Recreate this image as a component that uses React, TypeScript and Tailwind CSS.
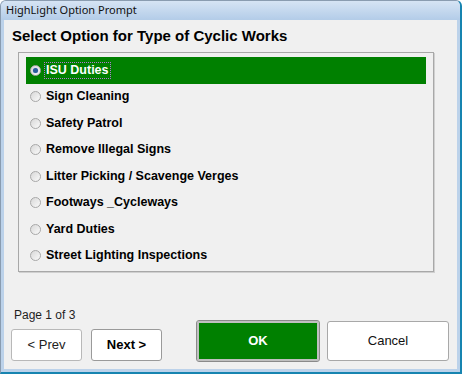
/**
 * HighLight option prompt dialog.
 */
const options = [
  "ISU Duties",
  "Sign Cleaning",
  "Safety Patrol",
  "Remove Illegal Signs",
  "Litter Picking / Scavenge Verges",
  "Footways _Cycleways",
  "Yard Duties",
  "Street Lighting Inspections",
];

const Radio = ({ checked }: { checked: boolean }) => (
  <div className="w-[11px] h-[11px] rounded-full border border-[#a8a8a8] bg-gradient-to-br from-[#d8d8d8] to-[#fafafa] flex items-center justify-center shrink-0">
    {checked && <div className="w-[5px] h-[5px] rounded-full bg-[#2a5d9c] shadow-[0_0_1px_#6fa3e0]" />}
  </div>
);

const OptionRow = ({ label, selected }: { label: string; selected: boolean }) => (
  <li className={`flex items-center h-[26.5px] pl-[4px] ${selected ? "bg-[#008000]" : ""}`}>
    <Radio checked={selected} />
    <span
      className={`ml-[4px] px-[1px] text-[12.5px] font-bold leading-[15px] ${
        selected ? "text-white outline outline-1 outline-dotted outline-[#b07ad0]" : "text-black"
      }`}
    >
      {label}
    </span>
  </li>
);

export default function App() {
  return (
    <div
      className="w-[462px] h-[374px] flex flex-col bg-[#bcd2ea] border-l border-t border-[#8a9cb0] border-r-2 border-r-[#1784b0] border-b-2 border-b-[#1784b0] rounded-t-[6px] overflow-hidden"
      style={{ fontFamily: '"Liberation Sans", Arial, sans-serif' }}
    >
      {/* title bar */}
      <div className="h-[19px] shrink-0 flex items-center px-[5px] bg-gradient-to-b from-[#d6e4f4] to-[#b3cce8]">
        <span className="text-[11px] text-[#101010]" style={{ fontFamily: '"Noto Sans", "Liberation Sans", sans-serif' }}>
          HighLight Option Prompt
        </span>
      </div>

      {/* client area */}
      <div className="flex-1 flex flex-col mx-[3px] mb-[3px] bg-[#f0f0f0]">
        <div className="h-[32px] shrink-0 flex items-center pl-[8px]">
          <h1 className="text-[15px] font-bold text-black">Select Option for Type of Cyclic Works</h1>
        </div>

        <div className="ml-[14px] w-[416px] h-[220px] border border-[#a8a8a8] shadow-[1px_1px_0_#d0d0d0] pt-[4px] px-[7px]">
          <ul className="flex flex-col">
            {options.map((o, i) => (
              <OptionRow key={o} label={o} selected={i === 0} />
            ))}
          </ul>
        </div>

        <div className="flex-1 flex items-end pb-[8px] pl-[7px]">
          <div className="flex flex-col">
            <span className="ml-[3px] mb-[5px] text-[12px] text-[#1e1e1e]">Page 1 of 3</span>
            <div className="flex gap-[9px]">
              <button className="w-[71px] h-[32px] bg-white border border-[#b8b8b8] rounded-[3px] text-[13px] text-[#222]">
                &lt; Prev
              </button>
              <button className="w-[71px] h-[32px] bg-white border border-[#9a9a9a] rounded-[3px] text-[13px] font-bold text-black">
                Next &gt;
              </button>
            </div>
          </div>
          <button className="ml-[35px] w-[122px] h-[40px] bg-[#008000] border-2 border-[#c0c0c0] outline outline-1 outline-[#8a8a8a] rounded-[2px] text-[13px] font-bold text-white">
            OK
          </button>
          <button className="ml-[8px] w-[122px] h-[40px] bg-white border border-[#a8a8a8] rounded-[3px] text-[13px] text-[#111]">
            Cancel
          </button>
        </div>
      </div>
    </div>
  );
}
